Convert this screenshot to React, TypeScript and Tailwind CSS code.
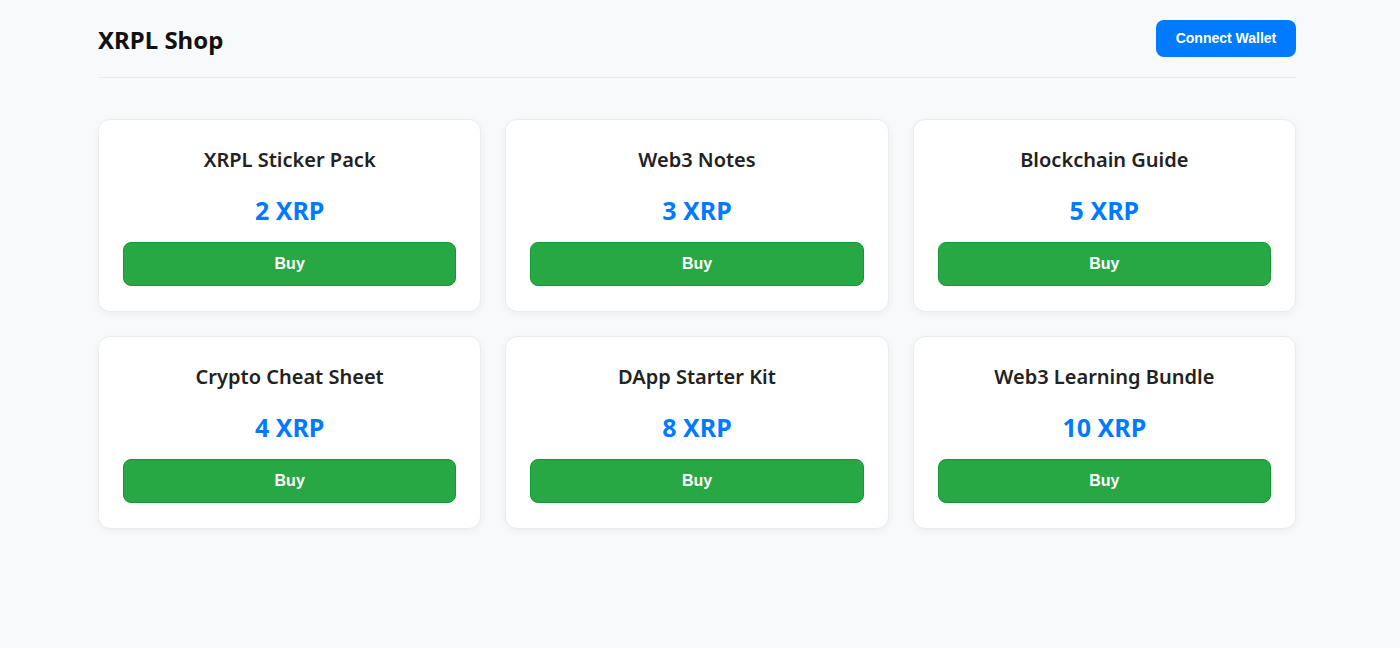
interface Product {
  id: number;
  name: string;
  price: number;
}

const products: Product[] = [
  { id: 1, name: "XRPL Sticker Pack", price: 2 },
  { id: 2, name: "Web3 Notes", price: 3 },
  { id: 3, name: "Blockchain Guide", price: 5 },
  { id: 4, name: "Crypto Cheat Sheet", price: 4 },
  { id: 5, name: "DApp Starter Kit", price: 8 },
  { id: 6, name: "Web3 Learning Bundle", price: 10 },
];

function ProductCard({ product }: { product: Product }) {
  return (
    <div className="rounded-xl border border-[#e9ecef] bg-white px-6 pt-7 pb-[25px] text-center shadow-[0_2px_8px_rgba(0,0,0,0.05)]">
      <h3 className="text-[20px] leading-6 font-semibold text-[#222222]">{product.name}</h3>
      <p className="mt-5 text-[25px] leading-9 font-bold text-[#007bff]">{product.price} XRP</p>
      <button
        type="button"
        className="mt-3.5 h-11 w-full cursor-pointer rounded-lg border border-[#0f9a32] bg-[#28a745] font-['Liberation_Sans',Arial,sans-serif] text-[16px] font-bold text-white"
      >
        Buy
      </button>
    </div>
  );
}

export default function App() {
  return (
    <div className="min-h-screen bg-[#f8f9fb] pr-1.5 font-['Noto_Sans','Open_Sans',sans-serif]">
      <div className="mx-auto max-w-[1198px] py-5">
        <header className="mb-[41px] flex items-center justify-between border-b border-[#e9ecef] pb-5">
          <h1 className="pt-0.5 text-[24px] leading-8 font-bold text-[#111111]">XRPL Shop</h1>
          <button
            type="button"
            className="h-[37px] w-[140px] cursor-pointer rounded-lg bg-[#007bff] font-['Liberation_Sans',Arial,sans-serif] text-[14px] font-bold text-white"
          >
            Connect Wallet
          </button>
        </header>
        <main className="grid grid-cols-3 gap-6">
          {products.map((product) => (
            <ProductCard key={product.id} product={product} />
          ))}
        </main>
      </div>
    </div>
  );
}
